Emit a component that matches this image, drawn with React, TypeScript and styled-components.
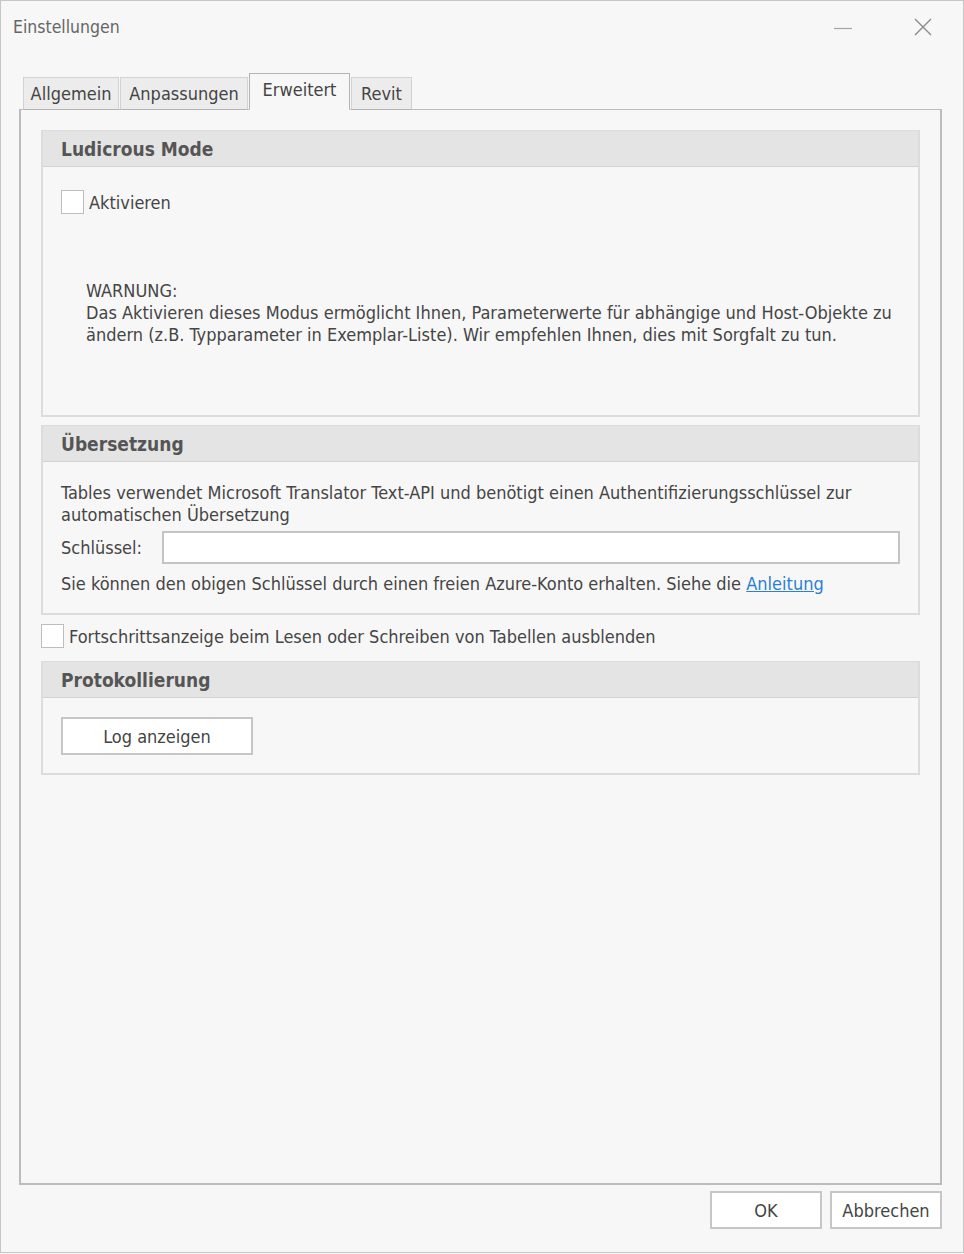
import { createGlobalStyle } from "styled-components";
import styled from "styled-components";

const GlobalStyle = createGlobalStyle`
  html, body {
    margin: 0;
    padding: 0;
    background: #f7f7f7;
  }
  body {
    font-family: "DejaVu Sans Condensed", "DejaVu Sans", sans-serif;
    font-size: 18px;
    color: #454545;
  }
`;

const Window = styled.div`
  box-sizing: border-box;
  width: 964px;
  height: 1253px;
  border: 1px solid #c6c6c6;
  background: #f7f7f7;
  display: flex;
  flex-direction: column;
`;

const TitleBar = styled.div`
  height: 52px;
  display: flex;
  align-items: center;
  padding: 0 0 0 12px;
`;

const Title = styled.div`
  flex: 1;
  font-size: 17.5px;
  color: #666;
`;

const CaptionButton = styled.div`
  width: 80px;
  height: 52px;
  display: flex;
  align-items: center;
  justify-content: center;
`;

const Body = styled.div`
  flex: 1;
  display: flex;
  flex-direction: column;
  padding: 20px 21px 0 18px;
`;

const TabStrip = styled.div`
  display: flex;
  align-items: flex-end;
  padding-left: 4px;
  height: 37px;
  position: relative;
  z-index: 1;
  margin-bottom: -1px;
`;

const Tab = styled.div<{ $active?: boolean; $width: number }>`
  box-sizing: border-box;
  width: ${(p) => p.$width}px;
  height: ${(p) => (p.$active ? "37px" : "33px")};
  display: flex;
  align-items: center;
  justify-content: center;
  border: 1px solid ${(p) => (p.$active ? "#b4b4b4" : "#d2d2d2")};
  border-bottom: 1px solid ${(p) => (p.$active ? "#f7f7f7" : "#b4b4b4")};
  background: ${(p) => (p.$active ? "#f7f7f7" : "#ececec")};
  color: #444;
  font-size: 18px;
  margin-right: 1px;
  padding-bottom: ${(p) => (p.$active ? "4px" : "0")};
`;

const TabPanel = styled.div`
  box-sizing: border-box;
  height: 1076px;
  border: 2px solid #bcbcbc;
  border-top-width: 1px;
  padding: 20px 20px 0 20px;
  display: flex;
  flex-direction: column;
`;

const Group = styled.div<{ $height: number }>`
  box-sizing: border-box;
  height: ${(p) => p.$height}px;
  border: 2px solid #dcdcdc;
  border-top-width: 1px;
  display: flex;
  flex-direction: column;
  margin-bottom: 8px;
`;

const GroupHeader = styled.div`
  height: 35px;
  flex-shrink: 0;
  background: #e4e4e4;
  border-bottom: 1px solid #d2d2d2;
  display: flex;
  align-items: center;
  padding-left: 18px;
  font-weight: bold;
  font-size: 19px;
  color: #555;
`;

const GroupContent = styled.div<{ $top: number }>`
  padding: ${(p) => p.$top}px 18px 0 18px;
  display: flex;
  flex-direction: column;
`;

const CheckRow = styled.label`
  display: flex;
  align-items: center;
  gap: 5px;
  height: 24px;
`;

const Box = styled.span`
  box-sizing: border-box;
  width: 23px;
  height: 24px;
  border: 1px solid #bdbdbd;
  background: #fff;
`;

const Warning = styled.div`
  margin: 66px 0 0 25px;
  line-height: 22px;
`;

const Paragraph = styled.div`
  line-height: 22px;
`;

const KeyRow = styled.div`
  display: flex;
  align-items: center;
  gap: 20px;
  margin: 5px 0 9px 0;
`;

const KeyInput = styled.div`
  box-sizing: border-box;
  flex: 1;
  height: 33px;
  border: 2px solid #c4c4c4;
  background: #fff;
`;

const Link = styled.a`
  color: #2b7fd4;
  text-decoration: underline;
`;

const LooseCheck = styled(CheckRow)`
  margin: 1px 0 13px 0;
`;

const Button = styled.div<{ $width: number }>`
  box-sizing: border-box;
  width: ${(p) => p.$width}px;
  height: 38px;
  border: 2px solid #c6c6c6;
  background: #fff;
  display: flex;
  align-items: center;
  justify-content: center;
  color: #444;
`;

const Footer = styled.div`
  display: flex;
  justify-content: flex-end;
  gap: 8px;
  padding-top: 6px;
`;

export default function App() {
  return (
    <>
      <GlobalStyle />
      <Window>
        <TitleBar>
          <Title>Einstellungen</Title>
          <CaptionButton>
            <svg width="20" height="20" viewBox="0 0 20 20">
              <path d="M1 11.5 H19" stroke="#a6a6a6" strokeWidth="1.2" />
            </svg>
          </CaptionButton>
          <CaptionButton>
            <svg width="20" height="20" viewBox="0 0 20 20">
              <path d="M2 2 L18 18 M18 2 L2 18" stroke="#8a8a8a" strokeWidth="1.4" />
            </svg>
          </CaptionButton>
        </TitleBar>
        <Body>
          <TabStrip>
            <Tab $width={96}>Allgemein</Tab>
            <Tab $width={128}>Anpassungen</Tab>
            <Tab $width={101} $active>
              Erweitert
            </Tab>
            <Tab $width={61}>Revit</Tab>
          </TabStrip>
          <TabPanel>
            <Group $height={287}>
              <GroupHeader>Ludicrous Mode</GroupHeader>
              <GroupContent $top={23}>
                <CheckRow>
                  <Box />
                  Aktivieren
                </CheckRow>
                <Warning>
                  WARNUNG:
                  <br />
                  Das Aktivieren dieses Modus ermöglicht Ihnen, Parameterwerte für abhängige und Host-Objekte zu
                  <br />
                  ändern (z.B. Typparameter in Exemplar-Liste). Wir empfehlen Ihnen, dies mit Sorgfalt zu tun.
                </Warning>
              </GroupContent>
            </Group>
            <Group $height={190}>
              <GroupHeader>Übersetzung</GroupHeader>
              <GroupContent $top={20}>
                <Paragraph>
                  Tables verwendet Microsoft Translator Text-API und benötigt einen Authentifizierungsschlüssel zur
                  <br />
                  automatischen Übersetzung
                </Paragraph>
                <KeyRow>
                  Schlüssel:
                  <KeyInput />
                </KeyRow>
                <Paragraph>
                  Sie können den obigen Schlüssel durch einen freien Azure-Konto erhalten. Siehe die{" "}
                  <Link>Anleitung</Link>
                </Paragraph>
              </GroupContent>
            </Group>
            <LooseCheck>
              <Box />
              Fortschrittsanzeige beim Lesen oder Schreiben von Tabellen ausblenden
            </LooseCheck>
            <Group $height={114}>
              <GroupHeader>Protokollierung</GroupHeader>
              <GroupContent $top={19}>
                <Button $width={192}>Log anzeigen</Button>
              </GroupContent>
            </Group>
          </TabPanel>
          <Footer>
            <Button $width={112}>OK</Button>
            <Button $width={112}>Abbrechen</Button>
          </Footer>
        </Body>
      </Window>
    </>
  );
}
